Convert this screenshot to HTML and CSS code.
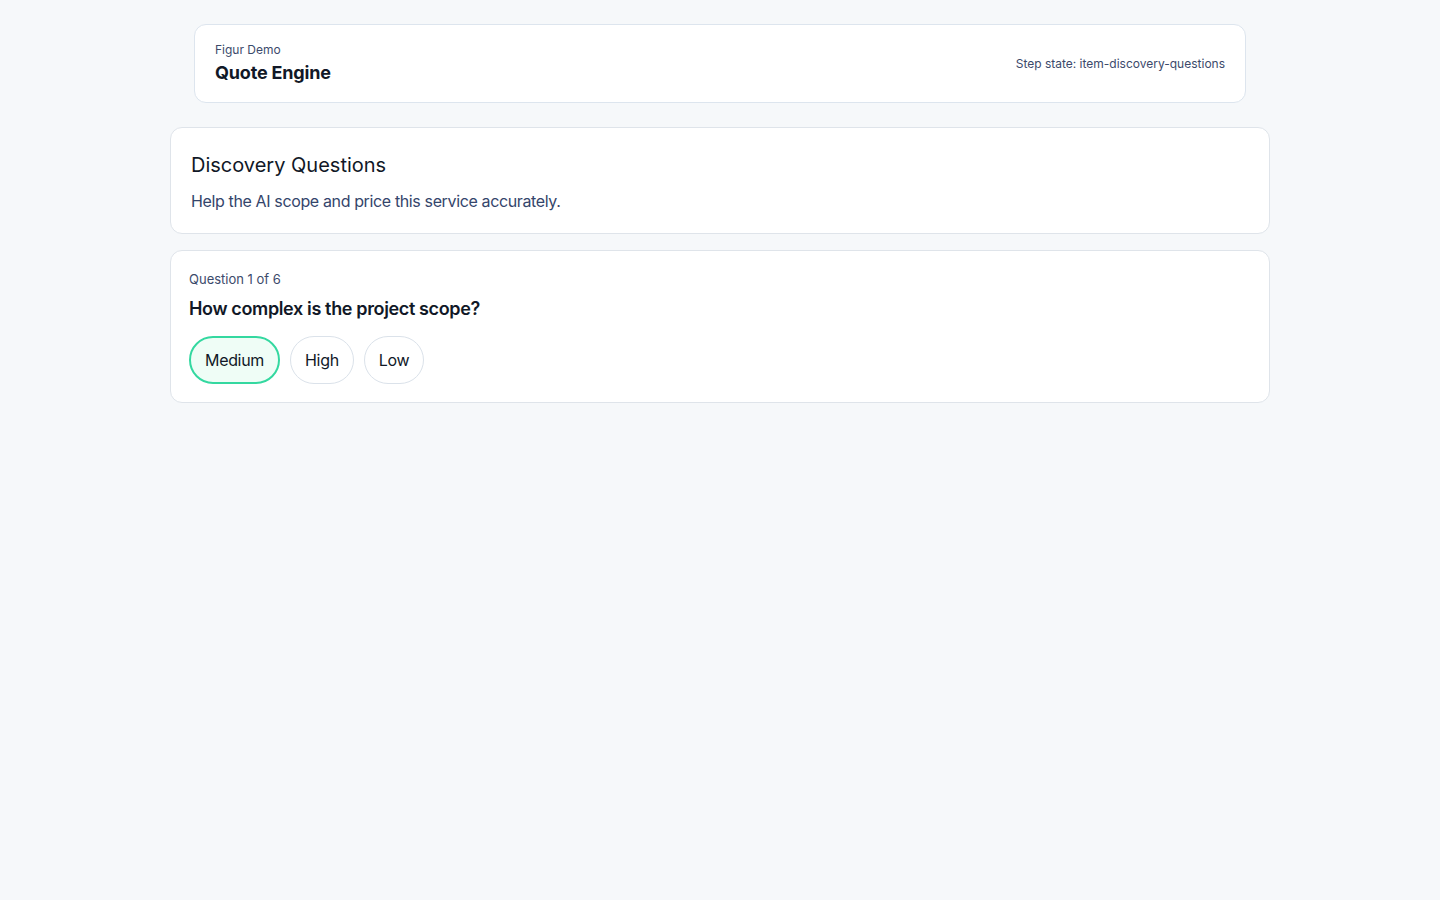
FILE: index.html
```html
<!DOCTYPE html>
<html lang="en">
<head>
<meta charset="utf-8">
<title>Quote Engine</title>
<link rel="stylesheet" href="styles.css">
</head>
<body>
<div class="page">
  <header class="topbar">
    <div class="brand">
      <div class="brand-sub">Figur Demo</div>
      <div class="brand-title">Quote Engine</div>
    </div>
    <div class="step-state">Step state: item-discovery-questions</div>
  </header>
  <main class="main">
    <section class="card intro">
      <h1 class="intro-title">Discovery Questions</h1>
      <p class="intro-text">Help the AI scope and price this service accurately.</p>
    </section>
    <section class="card question">
      <div class="q-count">Question 1 of 6</div>
      <h2 class="q-title">How complex is the project scope?</h2>
      <div class="options">
        <button class="option selected">Medium</button>
        <button class="option">High</button>
        <button class="option">Low</button>
      </div>
    </section>
  </main>
</div>
</body>
</html>
```

FILE: styles.css
```css
* { box-sizing: border-box; }
html, body { margin: 0; padding: 0; }
body {
  background: #f6f8fa;
  font-family: Inter, "Noto Sans", sans-serif;
  color: #111827;
  min-height: 100vh;
}
.page {
  width: 1100px;
  margin: 0 auto;
  padding-top: 24px;
}
.topbar {
  margin: 0 24px;
  height: 79px;
  background: #fff;
  border: 1px solid #dde5ee;
  border-radius: 12px;
  padding: 0 20px;
  display: flex;
  align-items: center;
  justify-content: space-between;
}
.brand-sub {
  font-size: 12px;
  line-height: 16px;
  color: #3c4a6b;
}
.brand-title {
  font-size: 18px;
  line-height: 26px;
  font-weight: 700;
  letter-spacing: -0.01em;
  color: #111827;
  margin-top: 2px;
}
.step-state {
  font-size: 12px;
  color: #3c4a6b;
}
.main {
  margin-top: 24px;
  display: flex;
  flex-direction: column;
  gap: 16px;
}
.card {
  background: #fff;
  border: 1px solid #dfe4ea;
  border-radius: 12px;
}
.intro {
  padding: 23px 20px 22px;
}
.intro-title {
  margin: 0;
  font-size: 20px;
  line-height: 28px;
  font-weight: 400;
  color: #111827;
}
.intro-text {
  margin: 10px 0 0;
  font-size: 16px;
  line-height: 24px;
  letter-spacing: -0.023em;
  color: #34456b;
}
.intro { padding-bottom: 20px; }
.question {
  padding: 19px 18px 18px;
}
.q-count {
  font-size: 13px;
  line-height: 18px;
  color: #3c4a6b;
}
.q-title {
  margin: 9px 0 0;
  font-size: 18px;
  line-height: 24px;
  font-weight: 600;
  letter-spacing: -0.02em;
  color: #111827;
}
.options {
  margin-top: 15px;
  display: flex;
  gap: 10px;
}
.option {
  height: 48px;
  padding: 0 14px;
  border: 1px solid #dbe2ea;
  border-radius: 999px;
  background: #fff;
  font-family: inherit;
  font-size: 16px;
  letter-spacing: -0.02em;
  color: #111827;
  cursor: pointer;
}
.option.selected {
  border: 2px solid #34d8a0;
  background: #effdf6;
  padding: 0 14px;
}
```
